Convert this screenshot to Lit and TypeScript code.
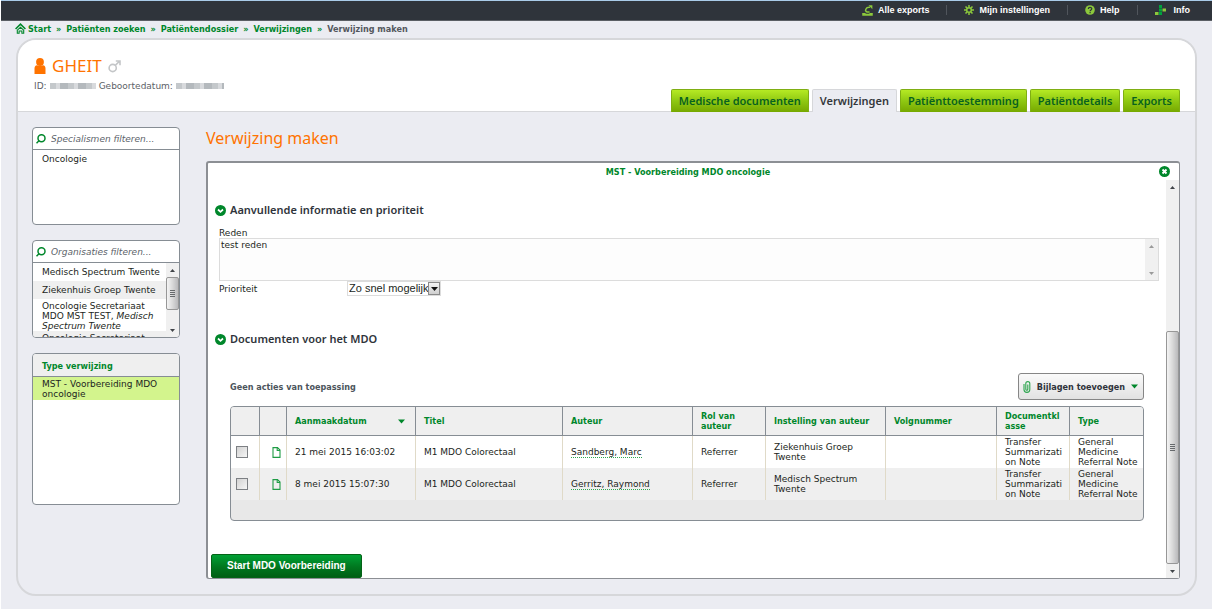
import { LitElement, html, css, svg } from "lit";
import { customElement, property, state } from "lit/decorators.js";
import { classMap } from "lit/directives/class-map.js";

interface ReferralDoc {
  created: string;
  title: string;
  author: string;
  role: string;
  institution: string;
  number: string;
  docClass: string;
  type: string;
}

const DOCS: ReferralDoc[] = [
  {
    created: "21 mei 2015 16:03:02",
    title: "M1 MDO Colorectaal",
    author: "Sandberg, Marc",
    role: "Referrer",
    institution: "Ziekenhuis Groep Twente",
    number: "",
    docClass: "Transfer Summarization Note",
    type: "General Medicine Referral Note",
  },
  {
    created: "8 mei 2015 15:07:30",
    title: "M1 MDO Colorectaal",
    author: "Gerritz, Raymond",
    role: "Referrer",
    institution: "Medisch Spectrum Twente",
    number: "",
    docClass: "Transfer Summarization Note",
    type: "General Medicine Referral Note",
  },
];

const TABS = ["Medische documenten", "Verwijzingen", "Patiënttoestemming", "Patiëntdetails", "Exports"];
const CRUMBS = ["Start", "Patiënten zoeken", "Patiëntendossier", "Verwijzingen"];

const icons = {
  home: svg`<svg width="11" height="11" viewBox="0 0 11 11" fill="none" stroke="#00872b" stroke-width="1.6"><path d="M.6 6 5.5 1.2 10.400 6"/><path d="M2.300 10.200V7.200L5.500 4.300 8.700 7.200v3H6.900V8H4.100v2.200z" stroke-width="1.100"/></svg>`,
  exports: svg`<svg width="11" height="11" viewBox="0 0 11 11" fill="none" stroke="#8cc83c" stroke-width="1.500"><path d="M.2 8.800h2.600c1 1 4.400 1 5.400 0h2.600M1 8.600v1.400h9V8.600"/><path d="M7.600 7c-3.400.4-4.900-1-3.600-3.200C4.600 2.600 6 2 8 2.200"/><path d="M6.500.3h3.900v3.900z" fill="#8cc83c" stroke="none"/></svg>`,
  gear: svg`<svg width="10" height="10" viewBox="0 0 10 10" fill="none" stroke="#8cc83c"><circle cx="5" cy="5" r="2.300" stroke-width="1.500"/><path d="M5 0v2.300M5 7.700V10M0 5h2.300M7.700 5H10M1.500 1.500l1.600 1.600M6.900 6.900l1.600 1.600M1.500 8.500l1.600-1.600M6.900 3.100l1.600-1.600" stroke-width="1.500"/></svg>`,
  help: svg`<svg width="10" height="10" viewBox="0 0 10 10"><circle cx="5" cy="5" r="4.800" fill="#8cc83c"/><path d="M3.300 4c0-2.200 3.500-2.200 3.500-.2C6.800 5 5.100 4.900 5.100 6.200M5.100 7.100v1.200" fill="none" stroke="#2e3238" stroke-width="1.200"/></svg>`,
  info: svg`<svg width="12" height="10" viewBox="0 0 12 10"><path d="M4 0h3v3H4zM4 3.500h3v3H4zM4 7h3v3H4z" fill="#00a33b"/><path d="M7.500 3.500h3.500v3H7.500zM0 7h3.500v3H0z" fill="#8cc83c"/></svg>`,
  person: svg`<svg width="12" height="16" viewBox="0 0 12 16" fill="#ff7300"><circle cx="6" cy="4" r="3.900"/><path d="M.5 16v-5.500Q.5 7.600 3 7.300q3 1.600 6 0 2.500.3 2.500 3.200V16z"/></svg>`,
  male: svg`<svg width="13" height="13" viewBox="0 0 13 13" fill="none" stroke="#c4c6c8" stroke-width="1.600"><circle cx="4.700" cy="8" r="3.600"/><path d="M7.300 5.400 11.700 1M7.800 1h4.200v4.200"/></svg>`,
  search: svg`<svg width="10" height="10" viewBox="0 0 10 10" fill="none" stroke="#00872b" stroke-width="1.500"><circle cx="5.500" cy="4.300" r="3.500"/><path d="M3.200 6.500.5 9.300"/></svg>`,
  fold: svg`<svg width="11" height="11" viewBox="0 0 11 11"><circle cx="5.500" cy="5.500" r="5.500" fill="#00872b"/><path d="M3 4.500 5.500 6.800 8 4.500" fill="none" stroke="#fff" stroke-width="1.700"/></svg>`,
  close: svg`<svg width="11" height="11" viewBox="0 0 11 11"><circle cx="5.500" cy="5.500" r="5.500" fill="#00872b"/><path d="M3.500 3.500l4 4M7.500 3.500l-4 4" stroke="#fff" stroke-width="1.900"/></svg>`,
  clip: svg`<svg width="8" height="12" viewBox="0 0 8 12" fill="none" stroke="#2fa650" stroke-width="1.100"><path d="M1 3v5.500a2.800 2.800 0 0 0 5.800 0V2.600a2 2 0 0 0-4 0v5.600a1 1 0 0 0 2 0V3.500"/></svg>`,
  down: svg`<svg width="7" height="5" viewBox="0 0 7 5"><path d="M0 .5h7L3.500 4.500z" fill="#00872b"/></svg>`,
  doc: svg`<svg width="9" height="11" viewBox="0 0 9 11" fill="none" stroke="#1f9c45" stroke-width="1.100"><path d="M1 .6h4.500L8 3.100v7.300H1z"/><path d="M5.200.8v2.700H8"/></svg>`,
};

@customElement("scroll-rail")
export class ScrollRail extends LitElement {
  @property({ type: Number }) before = 0;
  @property({ type: Number }) size = 0;
  @property({ type: Boolean }) idle = false;

  static styles = css`
    :host { display: flex; flex-direction: column; flex: none; width: 13px; background: #f0f0f0; }
    .arrow { flex: none; display: flex; align-items: center; justify-content: center; height: 14px; }
    .track { flex: 1; display: flex; flex-direction: column; min-height: 0; }
    .thumb {
      display: flex; align-items: center; justify-content: center; box-sizing: border-box;
      border: 1px solid #979797; border-radius: 2px;
      background: linear-gradient(to right, #f4f4f4, #dcdcdc 45%, #b9b9bb);
    }
  `;

  render() {
    const fill = this.idle ? "#9a9a9a" : "#404448";
    return html`
      <div class="arrow"><svg width="5" height="3" viewBox="0 0 5 3"><path d="M0 3h5L2.500 0z" fill=${fill} /></svg></div>
      <div class="track">
        ${this.size
          ? html`<div style="height:${this.before}%"></div>
              <div class="thumb" style="height:${this.size}%">
                <svg width="5" height="7" viewBox="0 0 5 7"><path d="M0 .5h5M0 2.500h5M0 4.500h5M0 6.500h5" stroke="#66696c" /></svg>
              </div>`
          : ""}
      </div>
      <div class="arrow"><svg width="5" height="3" viewBox="0 0 5 3"><path d="M0 0h5L2.500 3z" fill=${fill} /></svg></div>
    `;
  }
}

@customElement("app-root")
export class AppRoot extends LitElement {
  @state() private activeTab = "Verwijzingen";

  static styles = css`
    :host {
      --strong: bold 9px/10px "DejaVu Sans Condensed", "DejaVu Sans", Verdana, sans-serif;
      display: flex; flex-direction: column; box-sizing: border-box; min-height: 100vh;
      background: #ebecf2; color: #1c1f22; border-left: 1px solid #fff; border-bottom: 1px solid #fff;
      font: 9px/10px "DejaVu Sans", Verdana, sans-serif;
    }
    * { box-sizing: border-box; }
    svg { display: block; flex: none; }
    a { color: inherit; text-decoration: none; }
    button { font: inherit; color: inherit; cursor: pointer; }
    h1, h2, h3, p, ul { margin: 0; padding: 0; font-weight: normal; }
    ul { list-style: none; }

    .topbar {
      display: flex; justify-content: flex-end; align-items: center; height: 21px; padding: 0 22px 1px 0;
      background: #2f343b; border-top: 1px solid #a9cbe8; border-bottom: 1px solid #5a5e64;
      color: #fff; font: bold 9px/10px "Liberation Sans", Arial, sans-serif;
    }
    .topbar a { display: flex; align-items: center; gap: 5px; padding: 0 17px; border-left: 1px solid #50555c; }
    .topbar a:first-child { border-left: 0; }
    .topbar a:last-child { padding-right: 0; gap: 7px; }

    .crumbs { display: flex; align-items: center; gap: 5px; padding: 0 14px 2px; height: 17px; color: #00872b; font: var(--strong); }
    .crumbs svg { margin-right: -3px; }
    .crumbs .here { color: #54585e; }

    .shell {
      flex: 1; display: flex; flex-direction: column; margin: 0 15px 13px; overflow: hidden;
      border: 2px solid #d6d7da; border-radius: 20px;
    }
    .patient {
      display: flex; justify-content: space-between; align-items: flex-end; height: 72px; padding: 0 15px 0 16px;
      background: #fff; border-bottom: 1px solid #d6d7da;
    }
    .who { align-self: flex-start; padding-top: 16px; }
    .name { display: flex; align-items: center; gap: 6px; color: #ff7300; font: 17px/20px "Noto Sans", sans-serif; }
    .ids { display: flex; align-items: center; gap: 3px; padding-top: 5px; color: #5c6167; }
    .mask { height: 6px; background: repeating-linear-gradient(to right, #c4c8cb 0 6px, #d8dadd 6px 10px, #b4b9bd 10px 18px); }
    .mask.id { width: 46px; }
    .mask.dob { width: 48px; }
    .tabs { display: flex; gap: 3px; margin-bottom: -1px; }
    .tab {
      height: 23px; padding: 0 7px; border: 1px solid #7fae13; border-bottom-width: 0; border-radius: 2px 2px 0 0;
      background: linear-gradient(#b5ea24, #8fc812 50%, #76a800); color: #08611f;
      font: 600 11px/22px "Noto Sans", sans-serif;
    }
    .tab.active { background: #ebecf2; border-color: #d6d7da; color: #33373b; }

    .body { flex: 1; display: flex; gap: 26px; padding: 15px 15px 15px 14px; }
    .side { flex: none; width: 148px; display: flex; flex-direction: column; gap: 15px; }
    .box {
      display: flex; flex-direction: column; overflow: hidden; height: 98px;
      background: #fff; border: 1px solid #868d94; border-radius: 4px;
    }
    .box.tall { height: 152px; }
    .filter { display: flex; align-items: center; gap: 5px; height: 22px; padding: 0 3px; border-bottom: 1px solid #868d94; flex: none; }
    .filter input { flex: 1; min-width: 0; border: 0; padding: 0; outline: 0; background: none; font: italic 9px/12px "DejaVu Sans", Verdana, sans-serif; }
    .filter input::placeholder { color: #5c636a; opacity: 1; }
    .filter label { display: flex; }
    .list { flex: 1; display: flex; min-height: 0; overflow: hidden; }
    .list ul { flex: 1; min-width: 0; }
    .list li { padding: 4px 9px; }
    .list.orgs li { padding: 4px 0 4px 9px; }
    .list.orgs li:nth-child(even) { background: #efefef; }
    .list.orgs li.long { padding-top: 2px; padding-bottom: 0; }
    .list li.chosen { background: #d3f48d; padding: 2px 9px 1px; }
    .boxhead { flex: none; height: 23px; padding: 7px 9px 0; background: #efefef; border-bottom: 1px solid #868d94; color: #00872b; font: var(--strong); }

    .main { flex: 1; min-width: 0; display: flex; flex-direction: column; }
    .title { color: #ff7300; font: 16px/22px "Noto Sans", sans-serif; padding-bottom: 12px; }
    .panel { flex: 1; display: flex; flex-direction: column; background: #fff; border: 2px solid #8c8f94; border-width: 2px 1px 1px 2px; border-radius: 3px; }
    .panelhead { display: flex; align-items: center; height: 17px; padding: 0 9px 0 9px; color: #00872b; }
    .panelhead h3 { flex: 1; text-align: center; font: var(--strong); }
    .panelhead button { display: flex; border: 0; padding: 0; background: none; }
    .scroll { flex: 1; display: flex; }
    .content { flex: 1; min-width: 0; display: flex; flex-direction: column; padding: 21px 7px 0 3px; }
    .section { display: flex; align-items: center; gap: 4px; padding-left: 4px; color: #2f343b; font: 600 11px/18px "Noto Sans", sans-serif; }
    .fields { padding: 9px 0 34px 8px; }
    .fields label { display: block; }
    .area { display: flex; height: 43px; border: 1px solid #dcdcdc; }
    .area textarea { flex: 1; border: 0; padding: 1px; resize: none; outline: 0; overflow: hidden; background: #fdfdfd; color: inherit; font: inherit; }
    .row { display: flex; align-items: center; }
    .row label { width: 128px; }
    .pick { position: relative; display: flex; width: 94px; height: 15px; border: 1px solid #dcdcdc; }
    .pick select { appearance: none; width: 100%; border: 0; padding: 0 0 0 1px; background: #fff; color: #1c1f22; font: 11px/13px "Liberation Sans", Arial, sans-serif; }
    .pick .knob {
      position: absolute; right: 0; top: 0; bottom: 0; width: 12px; display: flex; align-items: center; justify-content: center;
      border: 1px solid #8a8a8a; background: linear-gradient(#f4f4f4, #cfcfcf); pointer-events: none;
    }
    .docs { padding: 25px 15px 0 19px; }
    .actions { display: flex; align-items: center; justify-content: space-between; padding-bottom: 6px; color: #4c555c; font: var(--strong); }
    .attach {
      display: flex; align-items: center; gap: 6px; height: 27px; padding: 0 5px 0 4px; border: 1px solid #868686; border-radius: 3px;
      background: linear-gradient(#fafafa, #e2e2e2); color: #2f343b;
    }
    .grid { border: 1px solid #868d94; border-radius: 4px; overflow: hidden; background: #e8e8e8; padding-bottom: 20px; }
    table { width: 100%; table-layout: fixed; border-collapse: separate; border-spacing: 0; }
    th, td { padding: 0 0 0 8px; text-align: left; overflow-wrap: anywhere; vertical-align: middle; }
    th { height: 29px; background: #efefef; border-bottom: 1px solid #868d94; border-right: 1px solid #868d94; color: #00872b; font: var(--strong); }
    td { height: 32px; border-right: 1px solid #e0dac8; }
    th:last-child, td:last-child { border-right: 0; }
    .snug { padding-right: 4px; }
    .wide { padding-right: 20px; }
    tbody tr { background: #fff; }
    tbody tr:nth-child(even) { background: #efefef; }
    .sort { display: flex; align-items: center; justify-content: space-between; padding-right: 10px; }
    .tick { padding-left: 5px; }
    .tick input { appearance: none; display: block; width: 12px; height: 12px; margin: 0; border: 1px solid #7d8084; background: linear-gradient(135deg, #d2d2d2, #f6f6f6); }
    .kind { padding-left: 12px; }
    .author { border-bottom: 1px dotted #2fa650; }
    .foot { margin-top: auto; }
    .start {
      height: 24px; padding: 0 15px; border: 1px solid #046317; border-radius: 2px;
      background: linear-gradient(#00a035, #00771f 55%, #005f14); color: #fff; font: bold 10px/20px "Liberation Sans", Arial, sans-serif;
    }
  `;

  render() {
    return html`
      <nav class="topbar" aria-label="Algemeen">
        <a href="#exports">${icons.exports}<span>Alle exports</span></a>
        <a href="#instellingen">${icons.gear}<span>Mijn instellingen</span></a>
        <a href="#help">${icons.help}<span>Help</span></a>
        <a href="#info">${icons.info}<span>Info</span></a>
      </nav>
      <nav class="crumbs" aria-label="Kruimelpad">
        ${icons.home}
        ${CRUMBS.map((c) => html`<a href="#">${c}</a><span>»</span>`)}
        <span class="here">Verwijzing maken</span>
      </nav>
      <div class="shell">
        <header class="patient">
          <div class="who">
            <h1 class="name">${icons.person}<span>GHEIT</span>${icons.male}</h1>
            <p class="ids">ID:<span class="mask id"></span>Geboortedatum:<span class="mask dob"></span></p>
          </div>
          <nav class="tabs">
            ${TABS.map(
              (t) => html`<button class=${classMap({ tab: true, active: t === this.activeTab })} @click=${() => (this.activeTab = t)}>${t}</button>`
            )}
          </nav>
        </header>
        <div class="body">
          <aside class="side">
            <div class="box">
              <div class="filter"><label for="spec" aria-label="Specialismen">${icons.search}</label><input id="spec" placeholder="Specialismen filteren..." /></div>
              <div class="list"><ul><li>Oncologie</li></ul></div>
            </div>
            <div class="box">
              <div class="filter"><label for="org" aria-label="Organisaties">${icons.search}</label><input id="org" placeholder="Organisaties filteren..." /></div>
              <div class="list orgs">
                <ul>
                  <li>Medisch Spectrum Twente</li>
                  <li>Ziekenhuis Groep Twente</li>
                  <li class="long">Oncologie Secretariaat MDO MST TEST, <em>Medisch Spectrum Twente</em></li>
                  <li class="long">Oncologie Secretariaat</li>
                </ul>
                <scroll-rail before="0" size="72"></scroll-rail>
              </div>
            </div>
            <div class="box tall">
              <h2 class="boxhead">Type verwijzing</h2>
              <div class="list"><ul><li class="chosen">MST - Voorbereiding MDO oncologie</li></ul></div>
            </div>
          </aside>
          <main class="main">
            <h2 class="title">Verwijzing maken</h2>
            <section class="panel">
              <div class="panelhead"><h3>MST - Voorbereiding MDO oncologie</h3><button aria-label="Sluiten">${icons.close}</button></div>
              <div class="scroll">
                <div class="content">
                  <h3 class="section">${icons.fold}<span>Aanvullende informatie en prioriteit</span></h3>
                  <div class="fields">
                    <label for="reden">Reden</label>
                    <div class="area"><textarea id="reden" .value=${"test reden"}></textarea><scroll-rail idle></scroll-rail></div>
                    <div class="row">
                      <label for="prio">Prioriteit</label>
                      <div class="pick">
                        <select id="prio"><option>Zo snel mogelijk</option></select>
                        <span class="knob"><svg width="7" height="4" viewBox="0 0 7 4"><path d="M0 0h7L3.500 4z" fill="#111" /></svg></span>
                      </div>
                    </div>
                  </div>
                  <h3 class="section">${icons.fold}<span>Documenten voor het MDO</span></h3>
                  <div class="docs">
                    <div class="actions">
                      <span>Geen acties van toepassing</span>
                      <button class="attach">${icons.clip}<span>Bijlagen toevoegen</span>${icons.down}</button>
                    </div>
                    <div class="grid">
                      <table>
                        <colgroup>
                          ${[29, 27, 129, 147, 130, 73, 120, 111, 73, 74].map((w) => html`<col style="width:${w}px" />`)}
                        </colgroup>
                        <thead>
                          <tr>
                            <th></th>
                            <th></th>
                            <th><div class="sort">Aanmaakdatum ${icons.down}</div></th>
                            <th>Titel</th>
                            <th>Auteur</th>
                            <th class="wide">Rol van auteur</th>
                            <th>Instelling van auteur</th>
                            <th>Volgnummer</th>
                            <th class="snug">Documentklasse</th>
                            <th>Type</th>
                          </tr>
                        </thead>
                        <tbody>
                          ${DOCS.map(
                            (d) => html`<tr>
                              <td class="tick"><input type="checkbox" aria-label=${d.created} /></td>
                              <td class="kind">${icons.doc}</td>
                              <td>${d.created}</td>
                              <td>${d.title}</td>
                              <td><a class="author" href="#">${d.author}</a></td>
                              <td>${d.role}</td>
                              <td class="wide">${d.institution}</td>
                              <td>${d.number}</td>
                              <td class="snug">${d.docClass}</td>
                              <td>${d.type}</td>
                            </tr>`
                          )}
                        </tbody>
                      </table>
                    </div>
                  </div>
                  <div class="foot"><button class="start">Start MDO Voorbereiding</button></div>
                </div>
                <scroll-rail before="37" size="63"></scroll-rail>
              </div>
            </section>
          </main>
        </div>
      </div>
    `;
  }
}
